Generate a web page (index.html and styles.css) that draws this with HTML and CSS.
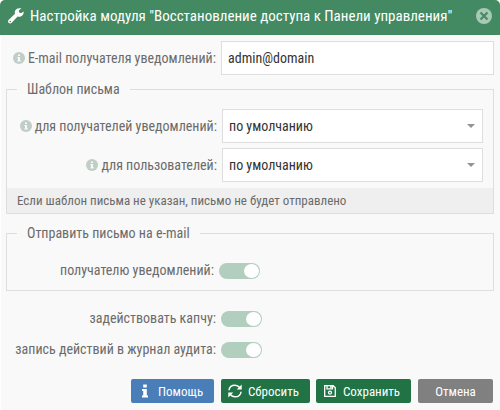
FILE: index.html
```html
<!DOCTYPE html>
<html lang="ru">
<head>
<meta charset="utf-8">
<title>Настройка модуля</title>
<link rel="stylesheet" href="styles.css">
</head>
<body>
<svg class="defs" width="0" height="0">
  <symbol id="info" viewBox="0 0 12 12"><circle cx="6" cy="6" r="6" fill="#c0cec7"/><path d="M5 2.500h2v1.600H5zM4.400 5H7v3.200h.7v1.200H4.400V8.200H5V6.200h-.6z" fill="#f9f9f9"/></symbol>
</svg>
<div class="dialog">
  <header class="title">
    <svg class="wrench" viewBox="0 0 16 16"><path fill="#fff" fill-rule="evenodd" d="M15.600 3.500 13 5.200 10.900 4.200V2.200L13.400.600C11.300-.4 8.300.3 7.200 2.600c-.5 1-.5 2.100-.2 3.100L.8 11.800c-1 1-1 2.200-.2 3 .9.900 2.200.8 3.100-.1l5.900-6.200c3.200 1 6.500-1.500 6-5zM2.200 12.700a.8.800 0 1 1 0 1.600.8.800 0 0 1 0-1.600z"/></svg>
    <h1>Настройка модуля "Восстановление доступа к Панели управления"</h1>
    <svg class="close" viewBox="0 0 16 16"><circle cx="8" cy="8" r="8" fill="#a8c9b6"/><path d="M4.500 4.500l7 7m0-7l-7 7" stroke="#438a62" stroke-width="2"/></svg>
  </header>
  <form class="body">
    <div class="row">
      <label class="label"><svg class="info"><use href="#info"/></svg><span>E-mail получателя уведомлений:</span></label>
      <div class="field">admin@domain</div>
    </div>
    <section class="group templates">
      <div class="legend"><span>Шаблон письма</span></div>
      <div class="row">
        <label class="label"><svg class="info"><use href="#info"/></svg><span>для получателей уведомлений:</span></label>
        <div class="field select"><span>по умолчанию</span><i class="arrow"></i></div>
      </div>
      <div class="row">
        <label class="label"><svg class="info"><use href="#info"/></svg><span>для пользователей:</span></label>
        <div class="field select"><span>по умолчанию</span><i class="arrow"></i></div>
      </div>
      <div class="note">Если шаблон письма не указан, письмо не будет отправлено</div>
    </section>
    <section class="group send">
      <div class="legend"><span>Отправить письмо на e-mail</span></div>
      <div class="row switch-row"><label class="label">получателю уведомлений:</label><i class="switch"></i></div>
    </section>
    <div class="row switch-row"><label class="label">задействовать капчу:</label><i class="switch"></i></div>
    <div class="row switch-row"><label class="label">запись действий в журнал аудита:</label><i class="switch"></i></div>
  </form>
  <footer class="buttons">
    <div class="btn help"><svg viewBox="0 0 14 14"><path fill="#fff" d="M5.200.5h3.600v3H5.200zM4 5h4.800v6.500H10v2H4v-2h1.200V7H4z"/></svg><span>Помощь</span></div>
    <div class="btn reset"><svg viewBox="0 0 14 14"><path fill="none" stroke="#fff" stroke-width="1.500" d="M1 6.300C1.300 3 4 1.200 7 1.200c2 0 3.500.8 4.700 2.300M13 7.700c-.3 3.300-3 5.100-6 5.100-2 0-3.500-.8-4.700-2.300"/><path fill="#fff" d="M13.700.5v5H8.700zM.3 13.500v-5h5z"/></svg><span>Сбросить</span></div>
    <div class="btn save"><svg viewBox="0 0 12 12"><path fill="none" stroke="#fff" stroke-width="1.300" d="M.7.7h8.500l2.100 2.100v8.500H.7zM3 .7v3.100h5.500V.7"/><circle cx="6" cy="7.600" r="1.500" fill="none" stroke="#fff" stroke-width="1.300"/><path fill="#fff" d="M6.200 1h1.500v2H6.200z"/></svg><span>Сохранить</span></div>
    <div class="btn cancel"><span>Отмена</span></div>
  </footer>
</div>
</body>
</html>
```
FILE: styles.css
```css
* { box-sizing: border-box; }
body { margin: 0; background: #fff; font: 14px/18px "Roboto Condensed", Roboto, sans-serif; font-stretch: 75%; color: #6b6b6b; }
.defs { display: block; }
.dialog { width: 500px; height: 410px; overflow: hidden; background: linear-gradient(90deg, #fff 1px, #f9f9f9 1px); border-radius: 5px 5px 0 0; }
.title { display: flex; align-items: center; height: 35px; padding: 0 8px 3px; background: #438a62; color: #fff; }
.title h1 { flex: 1; margin: 0 0 0 6px; font-size: 15px; font-weight: 400; line-height: 20px; white-space: nowrap; }
.wrench, .close { width: 16px; height: 16px; flex: none; }
.body { padding: 6px 6px 0 6px; }
.row { display: flex; align-items: center; height: 34px; }
.label { display: flex; align-items: center; justify-content: flex-end; width: 210px; margin-right: 5px; white-space: nowrap; }
.info { width: 12px; height: 12px; margin-right: 3px; }
.field { display: flex; align-items: center; flex: 1; height: 34px; padding: 0 6px; background: #fff; border: 1px solid #dedede; color: #333; }
.select { justify-content: space-between; }
.arrow { margin-bottom: 1px; border: 4px solid transparent; border-top-color: #929292; border-bottom: 0; }
.select .arrow { margin-right: 1px; }
.group { border: 1px solid #dedede; }
.legend { height: 18px; margin: -10px 0 0 10px; }
.legend span { display: inline-block; padding: 0 10px; background: #f9f9f9; }
.templates { height: 125px; margin-top: 14px; }
.templates .row { margin: 11px 10px 0 0; }
.templates .row + .row { margin-top: 5px; }
.note { height: 25px; margin-top: 6px; padding: 4px 10px 0; background: #efefef; font-size: 13px; }
.send { height: 58px; margin-top: 19px; }
.switch-row { height: 16px; }
.switch-row .label { padding-bottom: 2px; }
.send .switch-row { margin-top: 21px; }
.send .label { width: 207px; }
.send + .switch-row { margin-top: 20px; }
.switch-row + .switch-row { margin-top: 15px; }
.switch { display: flex; align-items: center; justify-content: flex-end; width: 41px; height: 16px; padding: 1px; border-radius: 8px; background: #b1cebe; }
.switch::after { content: ""; width: 15px; height: 14px; border-radius: 50%; background: #fff; }
.buttons { display: flex; height: 24px; margin-top: 21px; padding-left: 131px; }
.btn { display: flex; align-items: center; height: 24px; padding-left: 7px; color: #fff; border-radius: 2px; background: #217346; font-size: 13px; white-space: nowrap; }
.btn span { padding-top: 2px; }
.btn svg { flex: none; width: 14px; height: 14px; margin-right: 6px; }
.help { width: 83px; background: #4a7eb8; }
.reset { width: 89px; margin-left: 7px; }
.save { width: 95px; margin-left: 6px; padding-left: 8px; }
.btn.save svg { width: 12px; height: 12px; margin-right: 7px; }
.cancel { justify-content: center; width: 75px; margin-left: 7px; padding: 0; background: #808080; }
```
